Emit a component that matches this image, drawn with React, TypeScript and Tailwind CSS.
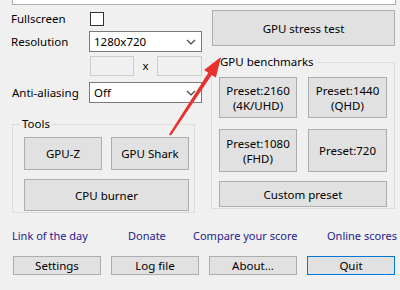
import React from "react";

const font = { fontFamily: '"Noto Sans", "Segoe UI", sans-serif' };

function Btn({ children, className = "" }: { children: React.ReactNode; className?: string }) {
  return (
    <div
      className={
        "flex items-center justify-center text-center leading-[15px] text-[11.5px] text-black bg-[#e1e1e1] border border-[#adadad] whitespace-nowrap " +
        className
      }
    >
      {children}
    </div>
  );
}

function Select({ value }: { value: string }) {
  return (
    <div className="w-[113px] h-[21px] bg-white border border-[#7a7a7a] flex items-center justify-between pl-[4px] pr-[5px]">
      <span>{value}</span>
      <svg width="10" height="6" viewBox="0 0 10 6">
        <path d="M1 1 L5 5 L9 1" fill="none" stroke="#444" strokeWidth="1.2" />
      </svg>
    </div>
  );
}

export default function App() {
  return (
    <div
      className="w-[400px] h-[290px] bg-[#f0f0f0] relative overflow-hidden text-[11.5px] text-black whitespace-nowrap"
      style={font}
    >
      <div className="ml-[12px] w-[384px] h-[5px] bg-white border-x border-b border-[#adadad]" />
      <div className="flex">
        {/* Left column */}
        <div className="w-[211px] flex flex-col">
          <div className="mt-[7px] h-[14px] flex items-center">
            <span className="w-[90px] pl-[11px]">Fullscreen</span>
            <div className="w-[14px] h-[14px] bg-white border border-[#333]" />
          </div>
          <div className="mt-[5px] h-[21px] flex items-center">
            <span className="w-[89px] pl-[11px]">Resolution</span>
            <Select value="1280x720" />
          </div>
          <div className="mt-[4px] h-[20px] flex items-center">
            <div className="ml-[90px] w-[44px] h-[20px] border border-[#cccccc] bg-[#f0f0f0]" />
            <span className="w-[23px] text-center">x</span>
            <div className="w-[45px] h-[20px] border border-[#cccccc] bg-[#f0f0f0]" />
          </div>
          <div className="mt-[6px] h-[21px] flex items-center">
            <span className="w-[89px] pl-[12px]">Anti-aliasing</span>
            <Select value="Off" />
          </div>
          <div className="relative mt-[21px] ml-[12px] w-[183px] h-[89px] border border-[#dcdcdc]">
            <span className="absolute left-[7px] top-[-10px] bg-[#f0f0f0] px-[2px] leading-[18px]">Tools</span>
            <div className="flex flex-col gap-[9px] pl-[11px] pt-[12px]">
              <div className="flex gap-[9px]">
                <Btn className="w-[78px] h-[33px]">GPU-Z</Btn>
                <Btn className="w-[78px] h-[33px]">GPU Shark</Btn>
              </div>
              <Btn className="w-[165px] h-[32px]">CPU burner</Btn>
            </div>
          </div>
        </div>
        {/* Right column */}
        <div className="w-[184px] flex flex-col">
          <Btn className="mt-[5px] ml-[1px] w-[183px] h-[36px]">GPU stress test</Btn>
          <div className="relative mt-[16px] w-[184px] h-[147px] border border-[#dcdcdc]">
            <span className="absolute left-[6px] top-[-10px] bg-[#f0f0f0] px-[2px] leading-[18px]">GPU benchmarks</span>
            <div className="flex flex-col pl-[7px] pt-[14px]">
              <div className="flex gap-[11px]">
                <Btn className="w-[78px] h-[41px]">
                  Preset:2160
                  <br />
                  (4K/UHD)
                </Btn>
                <Btn className="w-[79px] h-[41px]">
                  Preset:1440
                  <br />
                  (QHD)
                </Btn>
              </div>
              <div className="flex gap-[11px] mt-[11px]">
                <Btn className="w-[78px] h-[43px]">
                  Preset:1080
                  <br />
                  (FHD)
                </Btn>
                <Btn className="w-[79px] h-[43px]">Preset:720</Btn>
              </div>
              <Btn className="mt-[9px] w-[168px] h-[26px]">Custom preset</Btn>
            </div>
          </div>
        </div>
      </div>
      {/* Links */}
      <div className="mt-[15px] h-[16px] flex items-center text-[11px] text-[#23238e]">
        <span className="ml-[12px] w-[116px]">Link of the day</span>
        <span className="w-[65px]">Donate</span>
        <span className="w-[134px]">Compare your score</span>
        <span>Online scores</span>
      </div>
      {/* Bottom buttons */}
      <div className="mt-[12px] flex gap-[10px] pl-[13px]">
        <Btn className="w-[88px] h-[19px]">Settings</Btn>
        <Btn className="w-[88px] h-[19px]">Log file</Btn>
        <Btn className="w-[88px] h-[19px]">About...</Btn>
        <Btn className="w-[88px] h-[19px] !border-[#0078d7]">Quit</Btn>
      </div>
      {/* Red arrow overlay */}
      <svg className="absolute left-0 top-0 pointer-events-none" width="400" height="290">
        <polygon
          points="169,134.5 171,135.5 211.7,74.9 215.9,77.6 221,57 204.1,70 208.3,72.7"
          fill="#e8302e"
        />
      </svg>
    </div>
  );
}
